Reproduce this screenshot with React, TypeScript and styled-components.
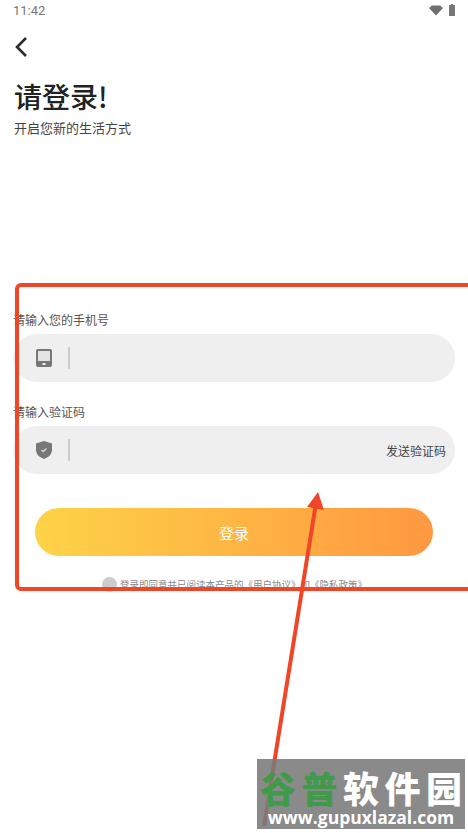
import React from "react";
import styled, { createGlobalStyle } from "styled-components";

const FONT = `"Noto Sans CJK SC", Roboto, "Noto Sans", sans-serif`;

const GlobalStyle = createGlobalStyle`
  html, body {
    margin: 0;
    padding: 0;
    background: #fff;
  }
  * {
    box-sizing: border-box;
  }
`;

export default function App() {
  return (
    <Page>
      <GlobalStyle />
      <StatusBar>
        <StatusTime>11:42</StatusTime>
        <StatusIcons>
          <svg width="14" height="11" viewBox="0 0 14 11">
            <path d="M0 3 L3 0.4 H11 L14 3 L7 10.5 Z" fill="#6f6f6f" />
          </svg>
          <svg width="6" height="12" viewBox="0 0 6 12">
            <path d="M2 0 H4 V1 H6 V12 H0 V1 H2 Z" fill="#777" />
          </svg>
        </StatusIcons>
      </StatusBar>
      <BackButton>
        <svg width="14" height="22" viewBox="0 0 14 22">
          <path d="M12 2 L3 11 L12 20" fill="none" stroke="#2b2b2b" strokeWidth="2.6" />
        </svg>
      </BackButton>
      <Title>请登录!</Title>
      <Subtitle>开启您新的生活方式</Subtitle>
      <Form>
        <FieldLabel>请输入您的手机号</FieldLabel>
        <InputRow>
          <InputIcon>
            <svg width="16" height="18" viewBox="0 0 16 18">
              <rect width="16" height="18" rx="2" fill="#777" />
              <rect x="2" y="2" width="12" height="10" fill="#e4e4e4" />
              <rect x="6.5" y="14" width="3" height="2" fill="#eee" />
            </svg>
          </InputIcon>
          <InputDivider />
        </InputRow>
        <FieldLabel>请输入验证码</FieldLabel>
        <InputRow>
          <InputIcon>
            <svg width="16" height="18" viewBox="0 0 16 18">
              <path d="M8 0 L16 2.5 V9 C16 13.5 12 16.5 8 18 C4 16.5 0 13.5 0 9 V2.5 Z" fill="#777" />
              <path d="M5.5 9 L7.2 10.6 L10.5 7.6" fill="none" stroke="#ddd" strokeWidth="1.3" />
            </svg>
          </InputIcon>
          <InputDivider />
          <SendCode>发送验证码</SendCode>
        </InputRow>
        <SubmitButton>登录</SubmitButton>
        <Agreement>
          <AgreeCircle />
          <AgreeText>登录即同意并已阅读本产品的《用户协议》和《隐私政策》</AgreeText>
        </Agreement>
      </Form>

      <Highlight />
      <Arrow width="468" height="833" viewBox="0 0 468 833">
        <line x1="264" y1="826" x2="316" y2="503" stroke="#f04527" strokeWidth="4" />
        <path d="M318 492 L307 507 L324 510 Z" fill="#f04527" />
      </Arrow>
      <Watermark>
        <WatermarkName>
          <WatermarkGreen>谷普</WatermarkGreen>软件园
        </WatermarkName>
        <WatermarkUrl>www.gupuxlazal.com</WatermarkUrl>
      </Watermark>
    </Page>
  );
}

const Page = styled.div`
  position: relative;
  width: 468px;
  height: 833px;
  overflow: hidden;
  background: #fff;
  font-family: ${FONT};
  color: #333;
`;

const StatusBar = styled.div`
  display: flex;
  align-items: center;
  justify-content: space-between;
  height: 20px;
  padding: 0 13px;
`;

const StatusTime = styled.span`
  font-family: Roboto, sans-serif;
  font-size: 13px;
  color: #777;
`;

const StatusIcons = styled.div`
  display: flex;
  align-items: center;
  gap: 6px;
`;

const BackButton = styled.div`
  display: flex;
  height: 22px;
  margin: 16px 0 0 14px;
`;

const Title = styled.h1`
  margin: 18px 0 0 14px;
  font-size: 28px;
  line-height: 40px;
  font-weight: 500;
  color: #222;
`;

const Subtitle = styled.p`
  margin: 2px 0 0 14px;
  font-size: 13px;
  line-height: 19px;
  color: #444;
`;

const Form = styled.div`
  display: flex;
  flex-direction: column;
  margin-top: 174px;
  padding: 0 13px;
`;

const FieldLabel = styled.div`
  font-size: 12px;
  line-height: 18px;
  color: #555;
  margin-bottom: 5px;
`;

const InputRow = styled.div`
  display: flex;
  align-items: center;
  width: 442px;
  height: 48px;
  margin-bottom: 21px;
  padding: 0 9px 0 23px;
  border-radius: 24px;
  background: #efefef;
`;

const InputIcon = styled.div`
  display: flex;
  width: 16px;
  height: 18px;
`;

const InputDivider = styled.div`
  width: 1.5px;
  height: 22px;
  margin-left: 16px;
  background: #ccc;
`;

const SendCode = styled.span`
  margin-left: auto;
  font-size: 12px;
  color: #444;
`;

const SubmitButton = styled.button`
  align-self: flex-start;
  width: 398px;
  height: 48px;
  margin: 13px 0 0 22px;
  border: 0;
  border-radius: 24px;
  background: linear-gradient(90deg, #fed347, #fe9841);
  color: #fff;
  font-family: ${FONT};
  font-size: 15px;
`;

const Agreement = styled.div`
  display: flex;
  align-items: center;
  gap: 3px;
  margin: 21px 0 0 89px;
`;

const AgreeCircle = styled.span`
  width: 15px;
  height: 15px;
  border-radius: 50%;
  background: #ccc;
`;

const AgreeText = styled.span`
  font-size: 9.5px;
  line-height: 15px;
  color: #888;
  white-space: nowrap;
`;

const Highlight = styled.div`
  position: absolute;
  left: 15px;
  top: 283px;
  width: 480px;
  height: 308px;
  border: 4px solid #f04527;
  border-radius: 6px;
`;

const Arrow = styled.svg`
  position: absolute;
  left: 0;
  top: 0;
`;

const Watermark = styled.div`
  position: absolute;
  left: 257px;
  top: 759px;
  width: 208px;
  height: 70px;
  background: rgba(122, 122, 122, 0.88);
`;

const WatermarkName = styled.div`
  margin: 7px 0 0 3px;
  font-size: 36px;
  line-height: 42px;
  font-weight: 900;
  letter-spacing: 5.5px;
  color: #fff;
  white-space: nowrap;
`;

const WatermarkGreen = styled.span`
  color: #3f9a4a;
`;

const WatermarkUrl = styled.div`
  font-family: "Open Sans", sans-serif;
  font-size: 17.5px;
  line-height: 18px;
  font-weight: 700;
  text-align: center;
  color: #fff;
  white-space: nowrap;
`;
